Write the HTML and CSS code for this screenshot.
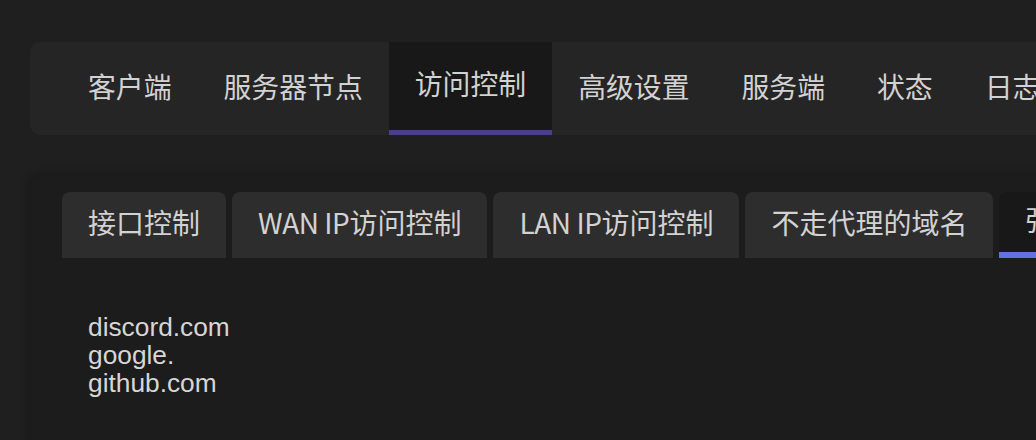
FILE: index.html
```html
<!DOCTYPE html>
<html lang="zh-CN">
<head>
<meta charset="utf-8">
<title>访问控制</title>
<link rel="stylesheet" href="styles.css">
</head>
<body>
<div class="page">
  <nav class="main-tabs">
    <div class="main-tab">客户端</div>
    <div class="main-tab">服务器节点</div>
    <div class="main-tab active">访问控制</div>
    <div class="main-tab">高级设置</div>
    <div class="main-tab">服务端</div>
    <div class="main-tab">状态</div>
    <div class="main-tab">日志</div>
  </nav>
  <section class="panel">
    <div class="sub-tabs">
      <div class="sub-tab">接口控制</div>
      <div class="sub-tab"><span class="latin">WAN IP</span>访问控制</div>
      <div class="sub-tab"><span class="latin">LAN IP</span>访问控制</div>
      <div class="sub-tab">不走代理的域名</div>
      <div class="sub-tab active">强制走代理的域名</div>
    </div>
    <div class="content">
      <div class="line">discord.com</div>
      <div class="line">google.</div>
      <div class="line">github.com</div>
    </div>
  </section>
</div>
</body>
</html>
```

FILE: styles.css
```css
html, body {
  margin: 0;
  padding: 0;
  background: #1f1f1f;
  overflow: hidden;
  height: 100%;
}
.page {
  padding: 42px 0 0 30px;
  width: 1300px;
  font-family: "Noto Sans CJK SC", "Liberation Sans", sans-serif;
  color: #d2d2d2;
}
.main-tabs {
  display: flex;
  height: 93px;
  background: #252525;
  border-radius: 10px;
  padding-left: 32px;
  box-sizing: border-box;
}
.main-tab {
  display: flex;
  align-items: center;
  padding: 0 26px 4px;
  font-size: 27.85px;
  line-height: 1;
  white-space: nowrap;
  box-sizing: border-box;
}
.main-tab.active {
  background: #181818;
  border-bottom: 5px solid #4b3f8a;
}
.panel {
  margin-top: 41px;
  background: #1c1c1c;
  border-radius: 10px;
  box-shadow: 0 0 10px rgba(0, 0, 0, 0.35);
  padding: 16px 0 0 32px;
  height: 300px;
}
.sub-tabs {
  display: flex;
  gap: 6px;
  height: 66px;
}
.sub-tab {
  display: flex;
  align-items: center;
  padding: 0 26px 6px;
  font-size: 28px;
  line-height: 1;
  white-space: nowrap;
  background: #2d2d2d;
  border-radius: 8px 8px 0 0;
  box-sizing: border-box;
}
.latin {
  letter-spacing: -0.45px;
}
.sub-tab.active {
  background: #181818;
  border-bottom: 6px solid #6272e0;
}
.content {
  padding: 55px 0 0 26px;
  font-family: "Liberation Sans", Arial, sans-serif;
  font-size: 26.3px;
  line-height: 28px;
  color: #d6d6d6;
}
```
